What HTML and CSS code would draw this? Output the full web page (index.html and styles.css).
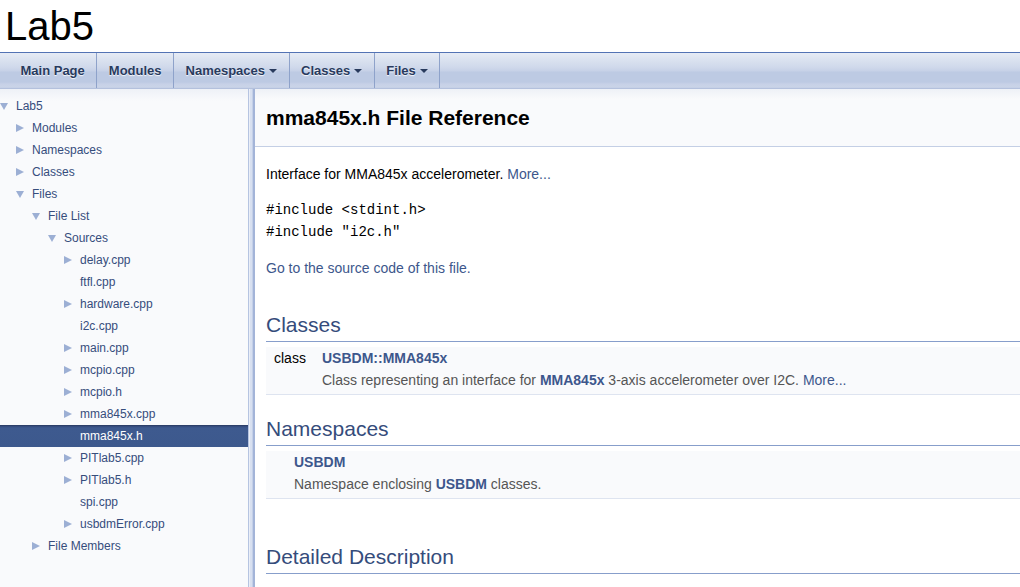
FILE: index.html
```html
<!DOCTYPE html>
<html>
<head>
<meta charset="utf-8">
<title>Lab5: mma845x.h File Reference</title>
<link rel="stylesheet" href="styles.css">
</head>
<body>
<div class="projectname">Lab5</div>
<nav class="tabs">
  <a class="tab first">Main Page</a>
  <a class="tab">Modules</a>
  <a class="tab">Namespaces<svg class="caret" width="8" height="4" viewBox="0 0 8 4"><path d="M0 0H8L4 4Z"/></svg></a>
  <a class="tab">Classes<svg class="caret" width="8" height="4" viewBox="0 0 8 4"><path d="M0 0H8L4 4Z"/></svg></a>
  <a class="tab">Files<svg class="caret" width="8" height="4" viewBox="0 0 8 4"><path d="M0 0H8L4 4Z"/></svg></a>
</nav>
<div class="main">
  <aside class="navtree">
    <div class="node l0"><span class="arrow"><svg width="8" height="8" viewBox="0 0 8 8"><path d="M0 1H8L4 8Z"/></svg></span><span class="label">Lab5</span></div>
    <div class="node l1"><span class="arrow"><svg width="8" height="8" viewBox="0 0 8 8"><path d="M0 0L8 4L0 8Z"/></svg></span><span class="label">Modules</span></div>
    <div class="node l1"><span class="arrow"><svg width="8" height="8" viewBox="0 0 8 8"><path d="M0 0L8 4L0 8Z"/></svg></span><span class="label">Namespaces</span></div>
    <div class="node l1"><span class="arrow"><svg width="8" height="8" viewBox="0 0 8 8"><path d="M0 0L8 4L0 8Z"/></svg></span><span class="label">Classes</span></div>
    <div class="node l1"><span class="arrow"><svg width="8" height="8" viewBox="0 0 8 8"><path d="M0 1H8L4 8Z"/></svg></span><span class="label">Files</span></div>
    <div class="node l2"><span class="arrow"><svg width="8" height="8" viewBox="0 0 8 8"><path d="M0 1H8L4 8Z"/></svg></span><span class="label">File List</span></div>
    <div class="node l3"><span class="arrow"><svg width="8" height="8" viewBox="0 0 8 8"><path d="M0 1H8L4 8Z"/></svg></span><span class="label">Sources</span></div>
    <div class="node l4"><span class="arrow"><svg width="8" height="8" viewBox="0 0 8 8"><path d="M0 0L8 4L0 8Z"/></svg></span><span class="label">delay.cpp</span></div>
    <div class="node l4"><span class="arrow"></span><span class="label">ftfl.cpp</span></div>
    <div class="node l4"><span class="arrow"><svg width="8" height="8" viewBox="0 0 8 8"><path d="M0 0L8 4L0 8Z"/></svg></span><span class="label">hardware.cpp</span></div>
    <div class="node l4"><span class="arrow"></span><span class="label">i2c.cpp</span></div>
    <div class="node l4"><span class="arrow"><svg width="8" height="8" viewBox="0 0 8 8"><path d="M0 0L8 4L0 8Z"/></svg></span><span class="label">main.cpp</span></div>
    <div class="node l4"><span class="arrow"><svg width="8" height="8" viewBox="0 0 8 8"><path d="M0 0L8 4L0 8Z"/></svg></span><span class="label">mcpio.cpp</span></div>
    <div class="node l4"><span class="arrow"><svg width="8" height="8" viewBox="0 0 8 8"><path d="M0 0L8 4L0 8Z"/></svg></span><span class="label">mcpio.h</span></div>
    <div class="node l4"><span class="arrow"><svg width="8" height="8" viewBox="0 0 8 8"><path d="M0 0L8 4L0 8Z"/></svg></span><span class="label">mma845x.cpp</span></div>
    <div class="node l4 selected"><span class="arrow"></span><span class="label">mma845x.h</span></div>
    <div class="node l4"><span class="arrow"><svg width="8" height="8" viewBox="0 0 8 8"><path d="M0 0L8 4L0 8Z"/></svg></span><span class="label">PITlab5.cpp</span></div>
    <div class="node l4"><span class="arrow"><svg width="8" height="8" viewBox="0 0 8 8"><path d="M0 0L8 4L0 8Z"/></svg></span><span class="label">PITlab5.h</span></div>
    <div class="node l4"><span class="arrow"></span><span class="label">spi.cpp</span></div>
    <div class="node l4"><span class="arrow"><svg width="8" height="8" viewBox="0 0 8 8"><path d="M0 0L8 4L0 8Z"/></svg></span><span class="label">usbdmError.cpp</span></div>
    <div class="node l2"><span class="arrow"><svg width="8" height="8" viewBox="0 0 8 8"><path d="M0 0L8 4L0 8Z"/></svg></span><span class="label">File Members</span></div>
  </aside>
  <div class="splitbar"></div>
  <section class="doc">
    <header class="header">
      <h1 class="title">mma845x.h File Reference</h1>
    </header>
    <div class="contents">
      <p class="brief">Interface for MMA845x accelerometer. <a class="link">More...</a></p>
      <div class="includes">
        <div>#include &lt;stdint.h&gt;</div>
        <div>#include "i2c.h"</div>
      </div>
      <p class="source"><a class="link">Go to the source code of this file.</a></p>

      <h2 class="groupheader first">Classes</h2>
      <div class="memtable classes">
        <div class="memleft">class</div>
        <div class="memright"><a class="el">USBDM::MMA845x</a></div>
        <div class="memleft"></div>
        <div class="mdesc">Class representing an interface for <a class="el">MMA845x</a> 3-axis accelerometer over I2C. <a class="link">More...</a></div>
      </div>

      <h2 class="groupheader second">Namespaces</h2>
      <div class="memtable namespaces">
        <div class="memleft"></div>
        <div class="memright"><a class="el">USBDM</a></div>
        <div class="memleft"></div>
        <div class="mdesc">Namespace enclosing <a class="el">USBDM</a> classes.</div>
      </div>

      <h2 class="groupheader third">Detailed Description</h2>
    </div>
  </section>
</div>
</body>
</html>
```
FILE: styles.css
```css
html, body {
  margin: 0;
  padding: 0;
  height: 100%;
  overflow: hidden;
  background: #ffffff;
  font-family: "Liberation Sans", Arial, sans-serif;
}

.projectname {
  height: 52px;
  box-sizing: border-box;
  padding: 3px 0 0 5px;
  font-size: 40px;
  line-height: 46px;
  color: #000000;
}

.tabs {
  display: flex;
  height: 35px;
  padding-left: 8px;
  border-top: 1px solid #5373b4;
  border-bottom: 1px solid #b4c1dd;
  background: linear-gradient(to bottom, #e6ebf5 0, #dce3f0 6px, #d0d9eb 14px, #c6d1e7 18px, #bdcae3 19px, #bdcae3 29px, #c7d1e7 31px, #cad4e8 34px, #c2cde4 35px);
}

.tab {
  display: flex;
  align-items: center;
  padding: 0 11.5px;
  border-right: 1px solid #8ea2ca;
  font-size: 13px;
  font-weight: bold;
  color: #283a5d;
  text-shadow: 0 1px 1px rgba(255, 255, 255, 0.9);
  cursor: pointer;
}

.tab.first {
  padding-left: 12.5px;
}

.caret {
  margin-left: 4px;
  margin-top: 1px;
  fill: #283a5d;
}

.main {
  display: flex;
  height: calc(100% - 89px);
}

.navtree {
  width: 248px;
  flex: none;
  box-sizing: border-box;
  padding-top: 6px;
  background: linear-gradient(to bottom, #eef1f7 0, #f9fafc 12px);
  font-size: 12px;
  color: #364d7c;
}

.node {
  display: flex;
  align-items: center;
  height: 22px;
  white-space: nowrap;
}

.node.l0 { padding-left: 0; }
.node.l1 { padding-left: 16px; }
.node.l2 { padding-left: 32px; }
.node.l3 { padding-left: 48px; }
.node.l4 { padding-left: 64px; }

.arrow {
  width: 16px;
  flex: none;
  display: flex;
  align-items: center;
}

.arrow svg {
  fill: #9cafd4;
}

.node.selected {
  background: linear-gradient(to bottom, #26375a 0, #34497a 1px, #3e5a8f 3px, #3d598d 100%);
  color: #ffffff;
}

.splitbar {
  width: 7px;
  flex: none;
  background: linear-gradient(to right, #b6c4e1 0, #b6c4e1 1px, #eaeef7 1px, #eaeef7 2px, #d8e0f0 2px, #d8e0f0 4px, #c4d0e8 4px, #c4d0e8 5px, #a3b4d8 5px, #a3b4d8 7px);
}

.doc {
  flex: 1;
  min-width: 0;
}

.header {
  height: 58px;
  box-sizing: border-box;
  padding: 16px 0 0 11px;
  border-bottom: 1px solid #c4cfe5;
  background: linear-gradient(to bottom, #eef1f7 0, #f9fafc 10px);
}

.title {
  margin: 0;
  font-size: 21px;
  line-height: 26px;
  font-weight: bold;
  color: #000000;
}

.contents {
  padding-left: 11px;
  font-size: 14px;
  color: #000000;
}

.brief {
  margin: 18px 0 0 0;
  line-height: 18px;
}

.link {
  color: #3d578c;
  cursor: pointer;
}

.includes {
  margin-top: 16px;
  font-family: "Liberation Mono", "Courier New", monospace;
  font-size: 14px;
  line-height: 22px;
}

.source {
  margin: 16px 0 0 0;
  line-height: 18px;
}

.groupheader {
  margin: 0;
  padding-bottom: 4px;
  border-bottom: 1px solid #879ecb;
  font-size: 21px;
  line-height: 24px;
  font-weight: normal;
  color: #354c7b;
}

.groupheader.first { margin-top: 36px; }
.groupheader.second { margin-top: 22px; }
.groupheader.third { margin-top: 46px; }

.memtable {
  display: grid;
  margin-top: 5px;
  padding-bottom: 3px;
  background: #f9fafc;
  border-bottom: 1px solid #dee4f0;
  line-height: 22px;
}

.memtable.classes { grid-template-columns: 56px 1fr; }
.memtable.namespaces { grid-template-columns: 28px 1fr; }

.memleft {
  padding-left: 8px;
  color: #000000;
}

.memright .el {
  font-weight: bold;
}

.el {
  color: #3d578c;
  font-weight: bold;
  cursor: pointer;
}

.mdesc {
  color: #555555;
  white-space: nowrap;
}
```
